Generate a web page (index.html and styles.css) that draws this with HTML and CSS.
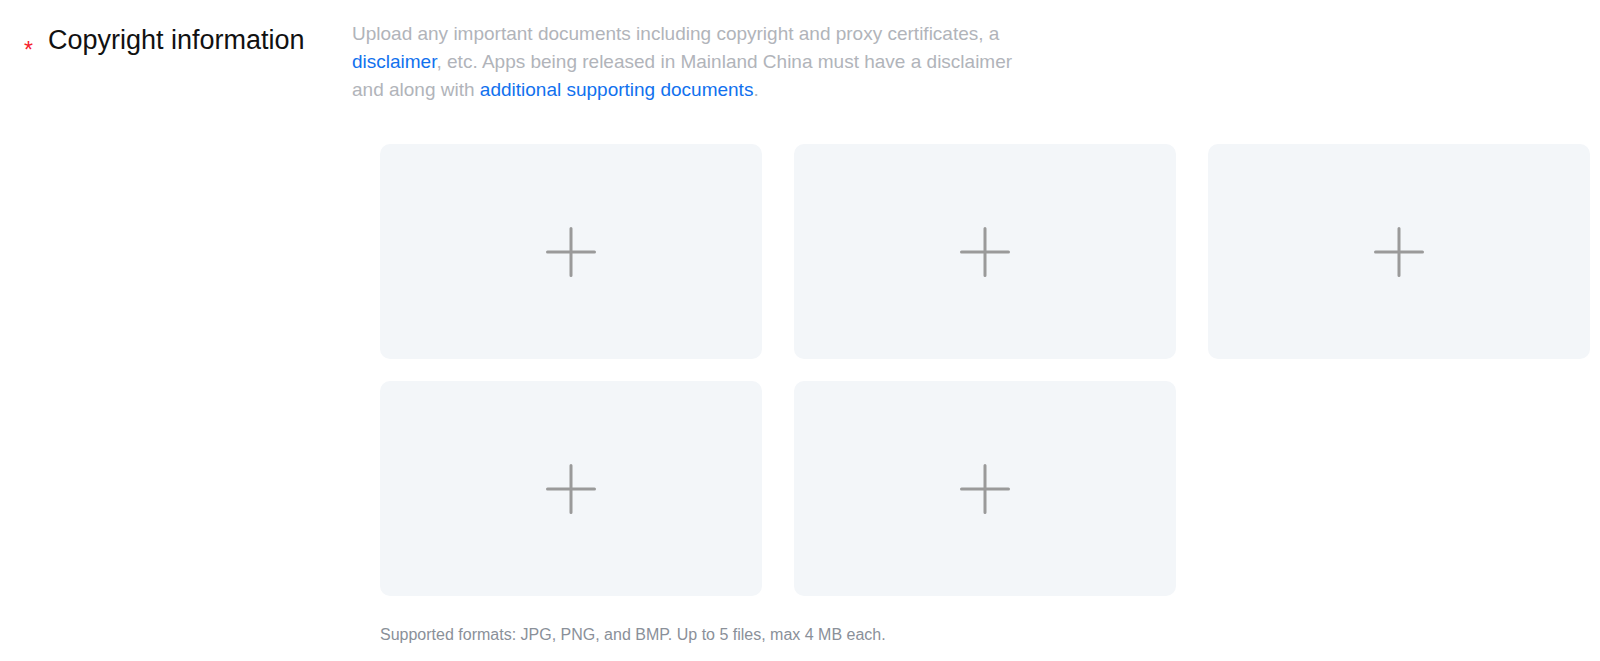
FILE: index.html
```html
<!DOCTYPE html>
<html lang="en">

<head>
    <meta charset="UTF-8">
    <meta name="viewport" content="width=device-width, initial-scale=1.0">
    <title>Copyright information</title>
    <link rel="stylesheet" href="styles.css">
</head>

<body>
    <div class="form-row">
        <div class="form-label">
            <span class="required">*</span>
            <span class="label-text">Copyright information</span>
        </div>
        <div class="form-content">
            <p class="desc">
                Upload any important documents including copyright and proxy certificates, a
                <a href="#">disclaimer</a>, etc. Apps being released in Mainland China must have a disclaimer
                and along with <a href="#">additional supporting documents</a>.
            </p>
            <div class="uploads">
                <div class="upload-card">
                    <svg class="plus" width="50" height="50" viewBox="0 0 50 50"><path d="M25 1.5v47M1.5 25h47" /></svg>
                </div>
                <div class="upload-card">
                    <svg class="plus" width="50" height="50" viewBox="0 0 50 50"><path d="M25 1.5v47M1.5 25h47" /></svg>
                </div>
                <div class="upload-card">
                    <svg class="plus" width="50" height="50" viewBox="0 0 50 50"><path d="M25 1.5v47M1.5 25h47" /></svg>
                </div>
                <div class="upload-card">
                    <svg class="plus" width="50" height="50" viewBox="0 0 50 50"><path d="M25 1.5v47M1.5 25h47" /></svg>
                </div>
                <div class="upload-card">
                    <svg class="plus" width="50" height="50" viewBox="0 0 50 50"><path d="M25 1.5v47M1.5 25h47" /></svg>
                </div>
            </div>
            <p class="hint">Supported formats: JPG, PNG, and BMP. Up to 5 files, max 4 MB each.</p>
        </div>
    </div>
</body>

</html>
```

FILE: styles.css
```css
body {
    margin: 0;
    background-color: #fff;
    font-family: "Liberation Sans", Arial, Helvetica, sans-serif;
}

.form-row {
    display: flex;
    padding: 20px 10px 0 24px;
}

.form-label {
    display: flex;
    align-items: flex-start;
    width: 328px;
    flex-shrink: 0;
}

.required {
    width: 24px;
    margin-top: 19px;
    font-size: 23px;
    line-height: 22px;
    color: #f5222d;
}

.label-text {
    margin-top: 2px;
    font-size: 27px;
    line-height: 36px;
    color: #111;
}

.form-content {
    flex: 1;
}

.desc {
    width: 690px;
    margin: 0;
    font-size: 19px;
    line-height: 28px;
    color: #b1b4ba;
}

.desc a {
    color: #1171ee;
    text-decoration: none;
}

.uploads {
    display: grid;
    grid-template-columns: repeat(3, 382px);
    gap: 22px 32px;
    margin: 40px 0 0 28px;
}

.upload-card {
    display: flex;
    justify-content: center;
    align-items: center;
    height: 215px;
    border-radius: 10px;
    background-color: #f3f6f9;
}

.plus path {
    fill: none;
    stroke: #9a9a9a;
    stroke-width: 3;
    stroke-linecap: round;
}

.hint {
    margin: 29px 0 0 28px;
    font-size: 16px;
    line-height: 20px;
    color: #8a9099;
}
```
